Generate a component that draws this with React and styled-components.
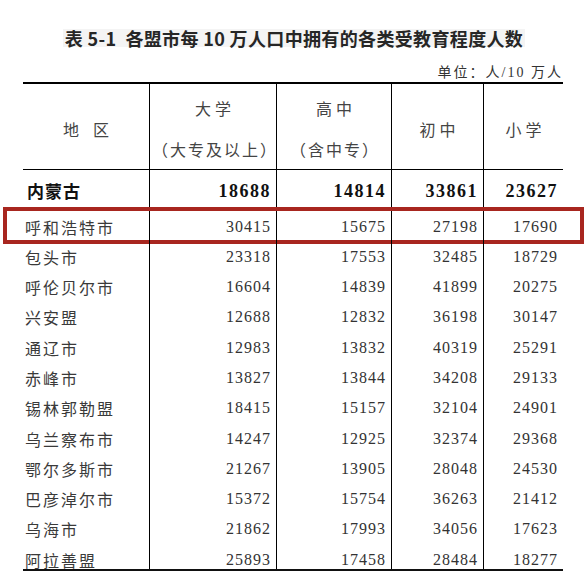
import React from 'react';
import styled, { createGlobalStyle } from 'styled-components';

const GlobalStyle = createGlobalStyle`
  html, body {
    margin: 0;
    padding: 0;
    background: #fff;
  }
`;

const cjk = `"Noto Sans CJK SC", sans-serif`;
const serif = `"Liberation Serif", "Noto Sans CJK SC", serif`;

// widths of the five columns, left to right
const COLS = '126px 127px 115px 92px 80px';

const Page = styled.div`
  width: 587px;
  height: 585px;
  padding-top: 29px;
  box-sizing: border-box;
  font-family: ${cjk};
  line-height: 18px;
  color: #333;
`;

const TitleWrap = styled.div`
  height: 18px;
  line-height: 18px;
  font-size: 18px;
  text-align: center;
  padding-left: 1px;
`;

const Title = styled.h1`
  display: inline-block;
  vertical-align: top;
  height: 18px;
  margin: 0;
  padding: 0 2px;
  background: #f4f4f4;
  font-family: ${cjk};
  font-size: 18px;
  line-height: 18px;
  font-weight: 700;
  letter-spacing: 0.35px;
  color: #262626;
  white-space: pre;
`;

const Unit = styled.div`
  width: 563px;
  height: 14px;
  margin-top: 19px;
  text-align: right;
  font-family: ${serif};
  font-size: 14px;
  line-height: 14px;
  letter-spacing: 2px;
  color: #333;
  margin-right: -2px;
`;

const Table = styled.div`
  width: 540px;
  margin: 2px 0 0 23px;
  border-top: 2px solid #000;
  border-bottom: 2px solid #111;
`;

const Row = styled.div`
  position: relative;
  display: grid;
  grid-template-columns: ${COLS};
  height: ${(p) => p.$h}px;
  border-bottom: ${(p) => (p.$rule ? '1px solid #000' : 'none')};

  ${(p) =>
    p.$marked &&
    `
    &::after {
      content: '';
      position: absolute;
      left: -20px;
      right: -21px;
      top: 1px;
      bottom: -8px;
      border: 4px solid #a8261f;
      pointer-events: none;
    }
  `}
`;

const HeadCell = styled.div`
  display: flex;
  flex-direction: column;
  align-items: center;
  justify-content: center;
  gap: 21px;
  padding-top: 4px;
  border-left: 1px solid #000;
  &:first-child {
    border-left: none;
  }
`;

const HeadText = styled.div`
  height: 20px;
  font-size: 16px;
  line-height: 20px;
  color: #444;
  letter-spacing: ${(p) => p.$sp}px;
  padding-left: ${(p) => p.$sp}px;
`;

const NameCell = styled.div`
  padding: ${(p) => p.$top}px 0 0 ${(p) => (p.$bold ? 4 : 2)}px;
  font-size: ${(p) => (p.$bold ? 17 : 16)}px;
  font-weight: ${(p) => (p.$bold ? 700 : 400)};
  letter-spacing: ${(p) => (p.$bold ? 1 : 2)}px;
  line-height: 18px;
  color: ${(p) => (p.$bold ? '#111' : '#3a3a3a')};
  white-space: nowrap;
`;

const NumCell = styled.div`
  border-left: 1px solid #000;
  padding: ${(p) => p.$top}px 5px 0 0;
  text-align: right;
  font-family: "Liberation Serif", serif;
  font-size: ${(p) => (p.$bold ? 18 : 16)}px;
  font-weight: ${(p) => (p.$bold ? 700 : 400)};
  letter-spacing: ${(p) => (p.$bold ? 1.5 : 1)}px;
  line-height: 18px;
  color: ${(p) => (p.$bold ? '#111' : '#333')};
`;

const total = ['内蒙古', 18688, 14814, 33861, 23627];

const rows = [
  ['呼和浩特市', 30415, 15675, 27198, 17690],
  ['包头市', 23318, 17553, 32485, 18729],
  ['呼伦贝尔市', 16604, 14839, 41899, 20275],
  ['兴安盟', 12688, 12832, 36198, 30147],
  ['通辽市', 12983, 13832, 40319, 25291],
  ['赤峰市', 13827, 13844, 34208, 29133],
  ['锡林郭勒盟', 18415, 15157, 32104, 24901],
  ['乌兰察布市', 14247, 12925, 32374, 29368],
  ['鄂尔多斯市', 21267, 13905, 28048, 24530],
  ['巴彦淖尔市', 15372, 15754, 36263, 21412],
  ['乌海市', 21862, 17993, 34056, 17623],
  ['阿拉善盟', 25893, 17458, 28484, 18277],
];

const DataRow = ({ data, bold, h, top, marked }) => (
  <Row $h={h} $marked={marked}>
    <NameCell $bold={bold} $top={top}>
      {data[0]}
    </NameCell>
    {data.slice(1).map((n, i) => (
      <NumCell key={i} $bold={bold} $top={top}>
        {n}
      </NumCell>
    ))}
  </Row>
);

const App = () => {
  return (
    <Page>
      <GlobalStyle />
      <TitleWrap>
        <Title>{'表 5-1  各盟市每 10 万人口中拥有的各类受教育程度人数'}</Title>
      </TitleWrap>
      <Unit>单位：人/10 万人</Unit>

      <Table>
        <Row $h={85} $rule>
          <HeadCell>
            <HeadText $sp={14}>地区</HeadText>
          </HeadCell>
          <HeadCell>
            <HeadText $sp={4}>大学</HeadText>
            <HeadText $sp={2}>（大专及以上）</HeadText>
          </HeadCell>
          <HeadCell>
            <HeadText $sp={4}>高中</HeadText>
            <HeadText $sp={2}>（含中专）</HeadText>
          </HeadCell>
          <HeadCell>
            <HeadText $sp={4}>初中</HeadText>
          </HeadCell>
          <HeadCell>
            <HeadText $sp={4}>小学</HeadText>
          </HeadCell>
        </Row>

        <DataRow data={total} bold h={35.7} top={12} />
        {rows.map((r, i) => (
          <DataRow key={r[0]} data={r} h={30.27} top={12} marked={i === 0} />
        ))}
      </Table>
    </Page>
  );
};

export default App;
